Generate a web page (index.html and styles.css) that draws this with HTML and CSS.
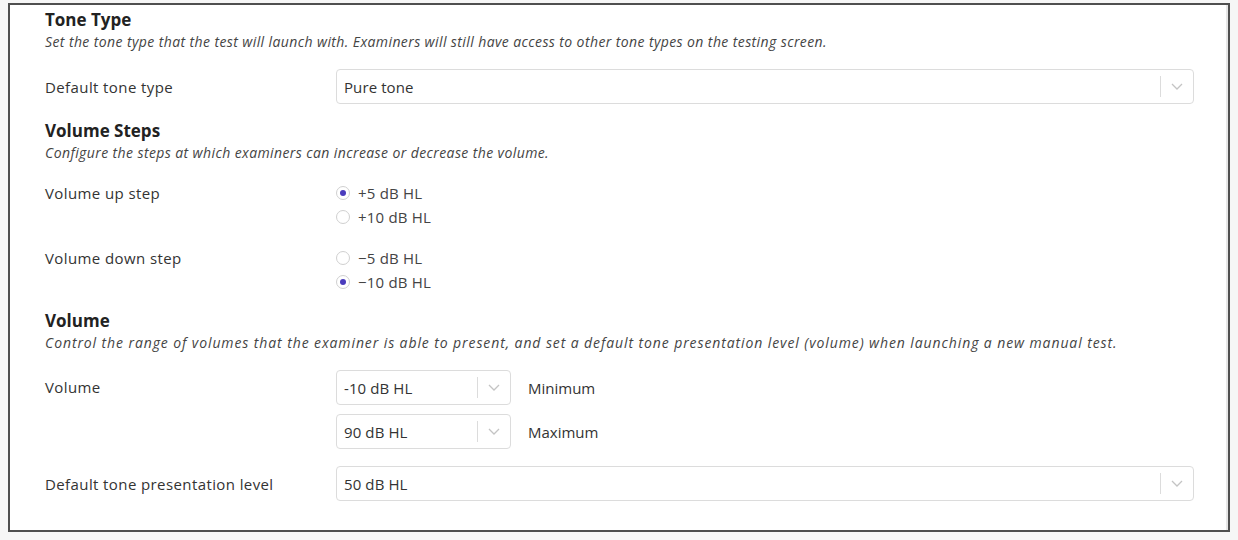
FILE: index.html
```html
<!DOCTYPE html>
<html lang="en">
<head>
    <meta charset="UTF-8">
    <title>Manual Test Settings</title>
    <link rel="stylesheet" href="styles.css">
</head>
<body>
    <div class="panel">
        <!-- Tone type -->
        <h2 class="section-title">Tone Type</h2>
        <p class="hint">Set the tone type that the test will launch with. Examiners will still have access to other tone types on the testing screen.</p>

        <div class="field">
            <label class="field-label">Default tone type</label>
            <div class="select">
                <span class="select-value">Pure tone</span>
                <span class="select-indicator">
                    <svg width="12" height="7" viewBox="0 0 12 7"><polyline points="1,1 6,6 11,1" fill="none" stroke="#c4c4c4" stroke-width="1.3"/></svg>
                </span>
            </div>
        </div>

        <!-- Volume steps -->
        <h2 class="section-title">Volume Steps</h2>
        <p class="hint">Configure the steps at which examiners can increase or decrease the volume.</p>

        <div class="field field-top radios-first">
            <label class="field-label radio-label">Volume up step</label>
            <div class="radio-group">
                <div class="radio checked"><span class="radio-dot"></span>+5 dB HL</div>
                <div class="radio"><span class="radio-dot"></span>+10 dB HL</div>
            </div>
        </div>

        <div class="field field-top radios-next">
            <label class="field-label radio-label">Volume down step</label>
            <div class="radio-group">
                <div class="radio"><span class="radio-dot"></span>&minus;5 dB HL</div>
                <div class="radio checked"><span class="radio-dot"></span>&minus;10 dB HL</div>
            </div>
        </div>

        <!-- Volume -->
        <h2 class="section-title">Volume</h2>
        <p class="hint hint-wide">Control the range of volumes that the examiner is able to present, and set a default tone presentation level (volume) when launching a new manual test.</p>

        <div class="field field-top">
            <label class="field-label select-label">Volume</label>
            <div class="range">
                <div class="range-row">
                    <div class="select select-small">
                        <span class="select-value">-10 dB HL</span>
                        <span class="select-indicator">
                            <svg width="12" height="7" viewBox="0 0 12 7"><polyline points="1,1 6,6 11,1" fill="none" stroke="#c4c4c4" stroke-width="1.3"/></svg>
                        </span>
                    </div>
                    <span class="range-note">Minimum</span>
                </div>
                <div class="range-row">
                    <div class="select select-small">
                        <span class="select-value">90 dB HL</span>
                        <span class="select-indicator">
                            <svg width="12" height="7" viewBox="0 0 12 7"><polyline points="1,1 6,6 11,1" fill="none" stroke="#c4c4c4" stroke-width="1.3"/></svg>
                        </span>
                    </div>
                    <span class="range-note">Maximum</span>
                </div>
            </div>
        </div>

        <div class="field field-last">
            <label class="field-label">Default tone presentation level</label>
            <div class="select">
                <span class="select-value">50 dB HL</span>
                <span class="select-indicator">
                    <svg width="12" height="7" viewBox="0 0 12 7"><polyline points="1,1 6,6 11,1" fill="none" stroke="#c4c4c4" stroke-width="1.3"/></svg>
                </span>
            </div>
        </div>
    </div>
</body>
</html>
```

FILE: styles.css
```css
body {
    margin: 0;
    background: #f6f6f6;
    font-family: "Open Sans", Arial, sans-serif;
    color: #333;
}
.panel {
    margin: 3px 8px 0 8px;
    background: #fff;
    border: 2px solid #4f4f4f;
    box-shadow: inset -2px 0 0 #e6e6e6;
    padding: 4px 34px 29px 35px;
}
.section-title {
    margin: 16px 0 0 0;
    font-size: 17px;
    line-height: 22px;
    font-weight: 700;
    color: #222;
}
.section-title:first-child {
    margin-top: 0;
}
.hint {
    margin: 2px 0 0 0;
    font-size: 14px;
    line-height: 18px;
    letter-spacing: 0.4px;
    font-style: italic;
    color: #444;
}
.hint-wide {
    letter-spacing: 0.9px;
}
.field {
    display: grid;
    grid-template-columns: 291px 1fr;
    align-items: center;
    margin-top: 18px;
}
.field-top {
    align-items: start;
}
.radios-first {
    margin-top: 19px;
}
.radios-next {
    margin-top: 17px;
}
.field-last {
    margin-top: 17px;
}
.field-label {
    font-size: 15px;
    line-height: 20px;
    letter-spacing: 0.4px;
    color: #333;
}
.radio-label {
    line-height: 24px;
}
.select-label {
    line-height: 35px;
}

/* Select boxes */
.select {
    display: flex;
    align-items: center;
    height: 35px;
    box-sizing: border-box;
    border: 1px solid #dcdcdc;
    border-radius: 4px;
    background: #fff;
}
.select-value {
    flex: 1;
    padding-left: 7px;
    font-size: 15px;
    letter-spacing: 0.1px;
    color: #333;
}
.select-indicator {
    display: flex;
    align-items: center;
    justify-content: center;
    width: 32px;
    height: 21px;
    border-left: 1px solid #dcdcdc;
}
.select-small {
    width: 175px;
}

/* Radios */
.radio-group {
    display: flex;
    flex-direction: column;
}
.radio {
    display: flex;
    align-items: center;
    height: 24px;
    font-size: 15px;
    letter-spacing: 0.2px;
    color: #444;
}
.radio-dot {
    width: 14px;
    height: 14px;
    box-sizing: border-box;
    border: 1px solid #d0d0d0;
    border-radius: 50%;
    margin-right: 8px;
    position: relative;
}
.radio.checked .radio-dot::after {
    content: "";
    position: absolute;
    left: 3px;
    top: 3px;
    width: 6px;
    height: 6px;
    border-radius: 50%;
    background: #4a3cbd;
}

/* Volume range */
.range {
    display: flex;
    flex-direction: column;
    gap: 9px;
}
.range-row {
    display: flex;
    align-items: center;
}
.range-note {
    margin-left: 17px;
    font-size: 15px;
    color: #333;
}
```
